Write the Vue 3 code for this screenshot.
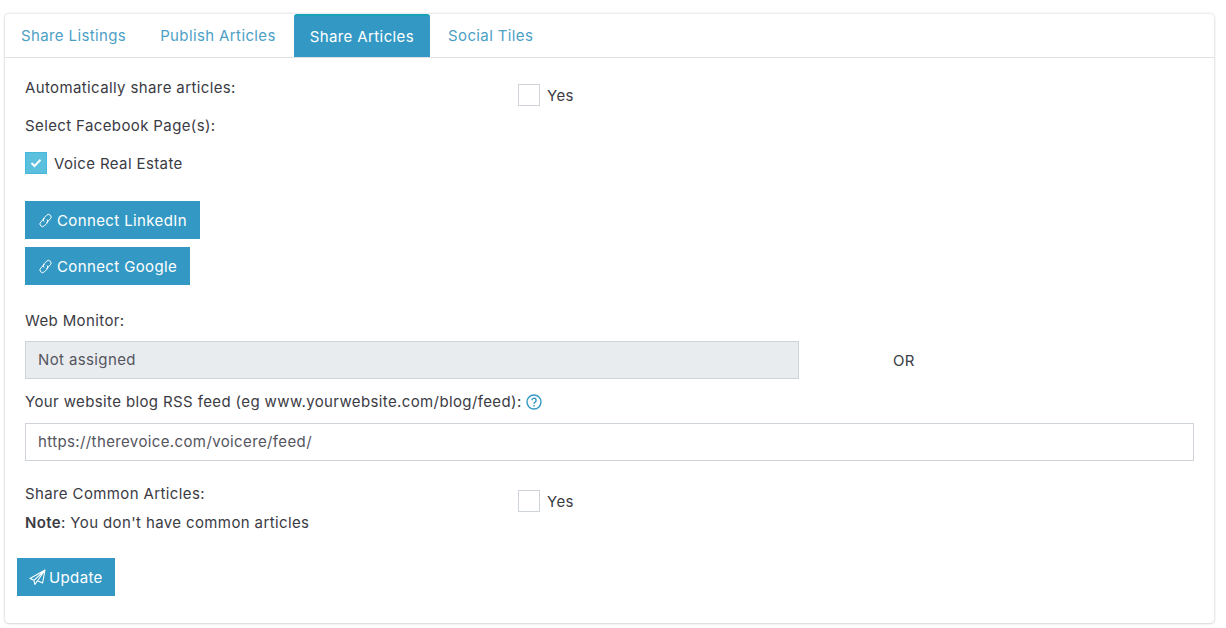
<script setup>
const tabs = [
  { label: 'Share Listings', active: false },
  { label: 'Publish Articles', active: false },
  { label: 'Share Articles', active: true },
  { label: 'Social Tiles', active: false },
]
</script>

<template>
  <div class="page">
    <div class="card">
      <nav class="tabs">
        <a v-for="t in tabs" :key="t.label" class="tab" :class="{ active: t.active }">{{ t.label }}</a>
      </nav>
      <div class="body">
        <div class="row-auto">
          <div class="label">Automatically share articles:</div>
          <label class="yes"><span class="check"></span><span>Yes</span></label>
        </div>
        <div class="label select-label">Select Facebook Page(s):</div>
        <label class="page-check">
          <span class="check checked">
            <svg width="12" height="10" viewBox="0 0 12 10"><path d="M1.5 5l3 3 6-6.2" fill="none" stroke="#fff" stroke-width="2"/></svg>
          </span>
          <span>Voice Real Estate</span>
        </label>
        <div class="connects">
          <button class="btn">
            <svg class="ico" width="17" height="17" viewBox="0 0 17 17" fill="none" stroke="#fff" stroke-width="1">
              <path d="M7.6 6.2l-3.9 3.9a2.6 2.6 0 0 0 3.7 3.7l2.6-2.6a2.6 2.6 0 0 0 0-3.7"/>
              <path d="M9.4 10.8l3.9-3.9a2.6 2.6 0 0 0-3.7-3.7L7 5.8a2.6 2.6 0 0 0 0 3.7"/>
            </svg>
            Connect LinkedIn
          </button>
          <button class="btn">
            <svg class="ico" width="17" height="17" viewBox="0 0 17 17" fill="none" stroke="#fff" stroke-width="1">
              <path d="M7.6 6.2l-3.9 3.9a2.6 2.6 0 0 0 3.7 3.7l2.6-2.6a2.6 2.6 0 0 0 0-3.7"/>
              <path d="M9.4 10.8l3.9-3.9a2.6 2.6 0 0 0-3.7-3.7L7 5.8a2.6 2.6 0 0 0 0 3.7"/>
            </svg>
            Connect Google
          </button>
        </div>
        <div class="label monitor-label">Web Monitor:</div>
        <div class="monitor-row">
          <div class="input disabled">Not assigned</div>
          <div class="or">OR</div>
        </div>
        <div class="label rss-label">
          Your website blog RSS feed (eg www.yourwebsite.com/blog/feed):
          <svg class="help" width="16" height="16" viewBox="0 0 16 16" fill="none" stroke="#3399c4" stroke-width="1.4">
            <circle cx="8" cy="8" r="7"/>
            <path d="M5.9 6.3a2.1 2.1 0 1 1 3.2 1.8c-.7.4-1.1.8-1.1 1.6"/>
            <path d="M8 11v1.4"/>
          </svg>
        </div>
        <div class="input">https://therevoice.com/voicere/feed/</div>
        <div class="row-common">
          <div>
            <div class="label">Share Common Articles:</div>
            <div class="label note"><strong>Note</strong>: You don't have common articles</div>
          </div>
          <label class="yes"><span class="check"></span><span>Yes</span></label>
        </div>
        <button class="btn update">
          <svg class="ico" width="17" height="17" viewBox="0 0 17 17" fill="none" stroke="#fff" stroke-width="1.1" stroke-linejoin="round">
            <path d="M16 1L1 9.5l4 1.8L16 1zM16 1l-2.4 13-5-2.3L16 1zM5 11.3l.8 4.2 2.8-3.8"/>
          </svg>
          Update
        </button>
      </div>
    </div>
  </div>
</template>

<style>
html, body { margin: 0; background: #fff; }
</style>

<style scoped>
.page {
  height: 628px;
  padding: 14px 12px 0 5px;
  box-sizing: border-box;
  font-family: Inter, "Liberation Sans", sans-serif;
  font-size: 15px;
  letter-spacing: 0.38px;
  color: #3b3b44;
}
.card {
  height: 609px;
  box-sizing: border-box;
  background: #fff;
  border-radius: 4px;
  box-shadow: 0 0 3px rgba(0, 0, 0, 0.2), 0 1px 2px rgba(0, 0, 0, 0.08);
}
.tabs {
  display: flex;
  height: 44px;
  box-sizing: border-box;
  border-bottom: 1px solid #dee2e6;
}
.tab {
  height: 43px;
  line-height: 44px;
  padding: 0 16px;
  color: #4d9fc6;
  margin-right: 2px;
}
.active {
  background: #3399c4;
  color: #fff;
  border-top: 2px solid #17a2b8;
  border-radius: 3px 3px 0 0;
  line-height: 41px;
  box-sizing: border-box;
}
.body { padding: 0 20px 0 20px; }
.label { line-height: 22px; }
.row-auto {
  display: grid;
  grid-template-columns: 493px 1fr;
  padding-top: 19px;
  height: 49px;
  box-sizing: border-box;
}
.yes {
  display: flex;
  align-items: center;
  gap: 7px;
  height: 22px;
  margin-top: 7px;
}
.check {
  display: flex;
  align-items: center;
  justify-content: center;
  width: 22px;
  height: 22px;
  box-sizing: border-box;
  border: 1px solid #ced4da;
  background: #fff;
}
.checked { background: #5bc0de; border-color: #46b8da; }
.select-label { margin-top: 8px; }
.page-check {
  display: flex;
  align-items: center;
  gap: 7px;
  margin-top: 15px;
  height: 22px;
}
.connects {
  display: flex;
  flex-direction: column;
  align-items: flex-start;
  gap: 8px;
  margin-top: 27px;
}
.btn {
  display: flex;
  align-items: center;
  gap: 3px;
  height: 38px;
  padding: 0 13px 0 12px;
  border: 0;
  background: #3399c4;
  color: #fff;
  font: inherit;
  letter-spacing: inherit;
}
.monitor-label { margin-top: 25px; }
.monitor-row { display: flex; margin-top: 9px; }
.input {
  height: 38px;
  line-height: 36px;
  box-sizing: border-box;
  padding: 0 12px;
  border: 1px solid #ced4da;
  color: #555560;
}
.disabled { width: 774px; background: #e9ecef; flex: none; }
.or { margin-left: 94px; line-height: 40px; }
.rss-label { margin-top: 10px; margin-bottom: 10px; display: flex; align-items: center; gap: 4px; }
.row-common {
  display: grid;
  grid-template-columns: 493px 1fr;
  margin-top: 22px;
}
.row-common .yes { margin-top: 7px; }
.note { margin-top: 7px; }
.note strong { font-weight: 600; }
.update { margin: 24px 0 0 -8px; padding: 0 12px 0 12px; }
</style>
